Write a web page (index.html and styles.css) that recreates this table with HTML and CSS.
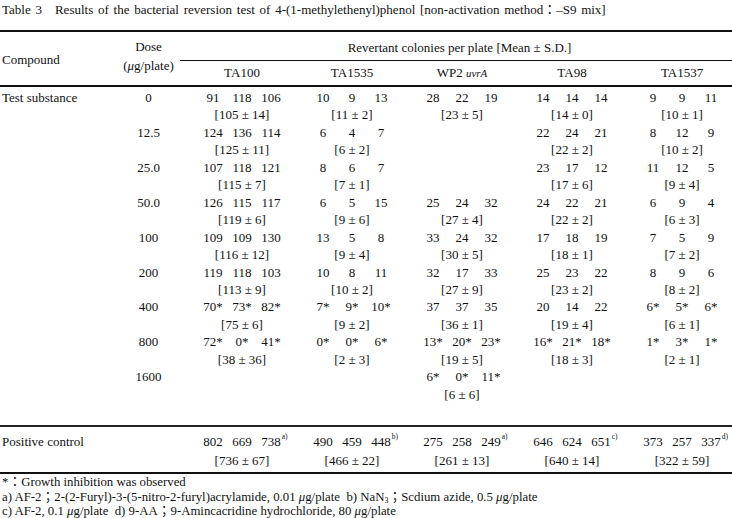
FILE: index.html
```html
<!DOCTYPE html>
<html>
<head>
<meta charset="utf-8">
<link rel="stylesheet" href="styles.css">
</head>
<body>
<div class="title">Table 3　Results of the bacterial reversion test of 4-(1-methylethenyl)phenol [non-activation method：–S9 mix]</div>
<table class="tbl">
  <colgroup>
    <col class="c-comp"><col class="c-dose"><col class="c-str"><col class="c-str"><col class="c-str"><col class="c-str"><col class="c-last">
  </colgroup>
  <thead>
    <tr class="h1">
      <th rowspan="2" class="left comp-h">Compound</th>
      <th rowspan="2" class="dose-h"><div>Dose</div><div>(<i>μ</i>g/plate)</div></th>
      <th colspan="5" class="rev-h"><div class="rev-text">Revertant colonies per plate [Mean ± S.D.]</div><div class="rev-rule"></div></th>
    </tr>
    <tr class="h2">
      <th>TA100</th><th>TA1535</th><th>WP2 <i class="uvr">uvrA</i></th><th>TA98</th><th class="last">TA1537</th>
    </tr>
  </thead>
  <tbody class="data">
    <tr class="first">
      <td class="left">Test substance</td><td class="dose">0</td>
      <td><div class="trio"><span>91</span><span>118</span><span>106</span></div><div class="mean">[105 ± 14]</div></td>
      <td><div class="trio"><span>10</span><span>9</span><span>13</span></div><div class="mean">[11 ± 2]</div></td>
      <td><div class="trio"><span>28</span><span>22</span><span>19</span></div><div class="mean">[23 ± 5]</div></td>
      <td><div class="trio"><span>14</span><span>14</span><span>14</span></div><div class="mean">[14 ± 0]</div></td>
      <td class="last"><div class="trio"><span>9</span><span>9</span><span>11</span></div><div class="mean">[10 ± 1]</div></td>
    </tr>
    <tr>
      <td></td><td class="dose">12.5</td>
      <td><div class="trio"><span>124</span><span>136</span><span>114</span></div><div class="mean">[125 ± 11]</div></td>
      <td><div class="trio"><span>6</span><span>4</span><span>7</span></div><div class="mean">[6 ± 2]</div></td>
      <td></td>
      <td><div class="trio"><span>22</span><span>24</span><span>21</span></div><div class="mean">[22 ± 2]</div></td>
      <td class="last"><div class="trio"><span>8</span><span>12</span><span>9</span></div><div class="mean">[10 ± 2]</div></td>
    </tr>
    <tr>
      <td></td><td class="dose">25.0</td>
      <td><div class="trio"><span>107</span><span>118</span><span>121</span></div><div class="mean">[115 ± 7]</div></td>
      <td><div class="trio"><span>8</span><span>6</span><span>7</span></div><div class="mean">[7 ± 1]</div></td>
      <td></td>
      <td><div class="trio"><span>23</span><span>17</span><span>12</span></div><div class="mean">[17 ± 6]</div></td>
      <td class="last"><div class="trio"><span>11</span><span>12</span><span>5</span></div><div class="mean">[9 ± 4]</div></td>
    </tr>
    <tr>
      <td></td><td class="dose">50.0</td>
      <td><div class="trio"><span>126</span><span>115</span><span>117</span></div><div class="mean">[119 ± 6]</div></td>
      <td><div class="trio"><span>6</span><span>5</span><span>15</span></div><div class="mean">[9 ± 6]</div></td>
      <td><div class="trio"><span>25</span><span>24</span><span>32</span></div><div class="mean">[27 ± 4]</div></td>
      <td><div class="trio"><span>24</span><span>22</span><span>21</span></div><div class="mean">[22 ± 2]</div></td>
      <td class="last"><div class="trio"><span>6</span><span>9</span><span>4</span></div><div class="mean">[6 ± 3]</div></td>
    </tr>
    <tr>
      <td></td><td class="dose">100</td>
      <td><div class="trio"><span>109</span><span>109</span><span>130</span></div><div class="mean">[116 ± 12]</div></td>
      <td><div class="trio"><span>13</span><span>5</span><span>8</span></div><div class="mean">[9 ± 4]</div></td>
      <td><div class="trio"><span>33</span><span>24</span><span>32</span></div><div class="mean">[30 ± 5]</div></td>
      <td><div class="trio"><span>17</span><span>18</span><span>19</span></div><div class="mean">[18 ± 1]</div></td>
      <td class="last"><div class="trio"><span>7</span><span>5</span><span>9</span></div><div class="mean">[7 ± 2]</div></td>
    </tr>
    <tr>
      <td></td><td class="dose">200</td>
      <td><div class="trio"><span>119</span><span>118</span><span>103</span></div><div class="mean">[113 ± 9]</div></td>
      <td><div class="trio"><span>10</span><span>8</span><span>11</span></div><div class="mean">[10 ± 2]</div></td>
      <td><div class="trio"><span>32</span><span>17</span><span>33</span></div><div class="mean">[27 ± 9]</div></td>
      <td><div class="trio"><span>25</span><span>23</span><span>22</span></div><div class="mean">[23 ± 2]</div></td>
      <td class="last"><div class="trio"><span>8</span><span>9</span><span>6</span></div><div class="mean">[8 ± 2]</div></td>
    </tr>
    <tr>
      <td></td><td class="dose">400</td>
      <td><div class="trio"><span>70*</span><span>73*</span><span>82*</span></div><div class="mean">[75 ± 6]</div></td>
      <td><div class="trio"><span>7*</span><span>9*</span><span>10*</span></div><div class="mean">[9 ± 2]</div></td>
      <td><div class="trio"><span>37</span><span>37</span><span>35</span></div><div class="mean">[36 ± 1]</div></td>
      <td><div class="trio"><span>20</span><span>14</span><span>22</span></div><div class="mean">[19 ± 4]</div></td>
      <td class="last"><div class="trio"><span>6*</span><span>5*</span><span>6*</span></div><div class="mean">[6 ± 1]</div></td>
    </tr>
    <tr>
      <td></td><td class="dose">800</td>
      <td><div class="trio"><span>72*</span><span>0*</span><span>41*</span></div><div class="mean">[38 ± 36]</div></td>
      <td><div class="trio"><span>0*</span><span>0*</span><span>6*</span></div><div class="mean">[2 ± 3]</div></td>
      <td><div class="trio"><span>13*</span><span>20*</span><span>23*</span></div><div class="mean">[19 ± 5]</div></td>
      <td><div class="trio"><span>16*</span><span>21*</span><span>18*</span></div><div class="mean">[18 ± 3]</div></td>
      <td class="last"><div class="trio"><span>1*</span><span>3*</span><span>1*</span></div><div class="mean">[2 ± 1]</div></td>
    </tr>
    <tr class="lastrow">
      <td></td><td class="dose">1600</td>
      <td></td>
      <td></td>
      <td><div class="trio"><span>6*</span><span>0*</span><span>11*</span></div><div class="mean">[6 ± 6]</div></td>
      <td></td>
      <td class="last"></td>
    </tr>
  </tbody>
  <tbody class="pos">
    <tr>
      <td class="left">Positive control</td><td></td>
      <td><div class="trio"><span>802</span><span>669</span><span><em class="ref">738<sup>a)</sup></em></span></div><div class="mean">[736 ± 67]</div></td>
      <td><div class="trio"><span>490</span><span>459</span><span><em class="ref">448<sup>b)</sup></em></span></div><div class="mean">[466 ± 22]</div></td>
      <td><div class="trio"><span>275</span><span>258</span><span><em class="ref">249<sup>a)</sup></em></span></div><div class="mean">[261 ± 13]</div></td>
      <td><div class="trio"><span>646</span><span>624</span><span><em class="ref">651<sup>c)</sup></em></span></div><div class="mean">[640 ± 14]</div></td>
      <td class="last"><div class="trio"><span>373</span><span>257</span><span><em class="ref">337<sup>d)</sup></em></span></div><div class="mean">[322 ± 59]</div></td>
    </tr>
  </tbody>
</table>
<div class="notes">
  <div>*：Growth inhibition was observed</div>
  <div>a) AF-2；2-(2-Furyl)-3-(5-nitro-2-furyl)acrylamide, 0.01 <i>μ</i>g/plate&nbsp; b) NaN<sub>3</sub>；Scdium azide, 0.5 <i>μ</i>g/plate</div>
  <div>c) AF-2, 0.1 <i>μ</i>g/plate&nbsp; d) 9-AA；9-Amincacridine hydrochloride, 80 <i>μ</i>g/plate</div>
</div>
</body>
</html>
```

FILE: styles.css
```css
html, body {
  margin: 0;
  padding: 0;
  background: #fff;
}
body {
  font-family: "Liberation Serif", "Noto Sans CJK JP", serif;
  font-size: 13px;
  font-weight: 400;
  color: #111;
  width: 732px;
  overflow: hidden;
}
.title {
  height: 30px;
  line-height: 16px;
  padding: 2px 0 0 2px;
  box-sizing: border-box;
  white-space: nowrap;
  word-spacing: 1.5px;
}
.tbl {
  width: 732px;
  border-collapse: collapse;
  table-layout: fixed;
}
.c-comp { width: 110px; }
.c-dose { width: 77px; }
.c-str { width: 110px; }
.c-last { width: 105px; }
.tbl th, .tbl td {
  padding: 0;
  font-weight: 400;
  text-align: center;
  vertical-align: top;
}
.tbl .left { text-align: left; padding-left: 2px; }
.tbl .last { padding-left: 5px; }
thead {
  border-top: 2px solid #111;
  border-bottom: 2px solid #111;
}
.h1 th { height: 28px; }
.tbl .comp-h { vertical-align: middle; padding-top: 3px; }
.tbl .dose-h {
  line-height: 19px;
  padding-top: 5px;
}
.rev-text {
  line-height: 17px;
  padding-top: 7px;
  height: 21px;
}
.rev-rule {
  margin-left: -7px;
  border-bottom: 1.5px solid #111;
}
.h2 th {
  height: 23px;
  line-height: 23px;
}
.uvr { font-size: 11px; }
.data td { line-height: 17.45px; }
.tbl .data tr.first td { padding-top: 2px; }
.tbl .data tr.lastrow td { padding-bottom: 22px; }
.trio {
  display: flex;
  justify-content: center;
}
.trio span {
  width: 29px;
  text-align: center;
  white-space: nowrap;
}
.ref {
  position: relative;
  font-style: normal;
}
.ref sup {
  position: absolute;
  left: 100%;
  margin-left: 1px;
  top: -2px;
  font-size: 7.5px;
  line-height: 10px;
}
.pos {
  border-top: 2px solid #222;
  border-bottom: 2px solid #111;
}
.tbl .pos td {
  line-height: 19px;
  padding-top: 5px;
  padding-bottom: 2px;
}
.notes {
  font-size: 12.8px;
  line-height: 14.5px;
  padding: 1px 0 0 2px;
  white-space: nowrap;
}
.notes sub {
  font-size: 8px;
  line-height: 0;
  vertical-align: -2px;
}
```
